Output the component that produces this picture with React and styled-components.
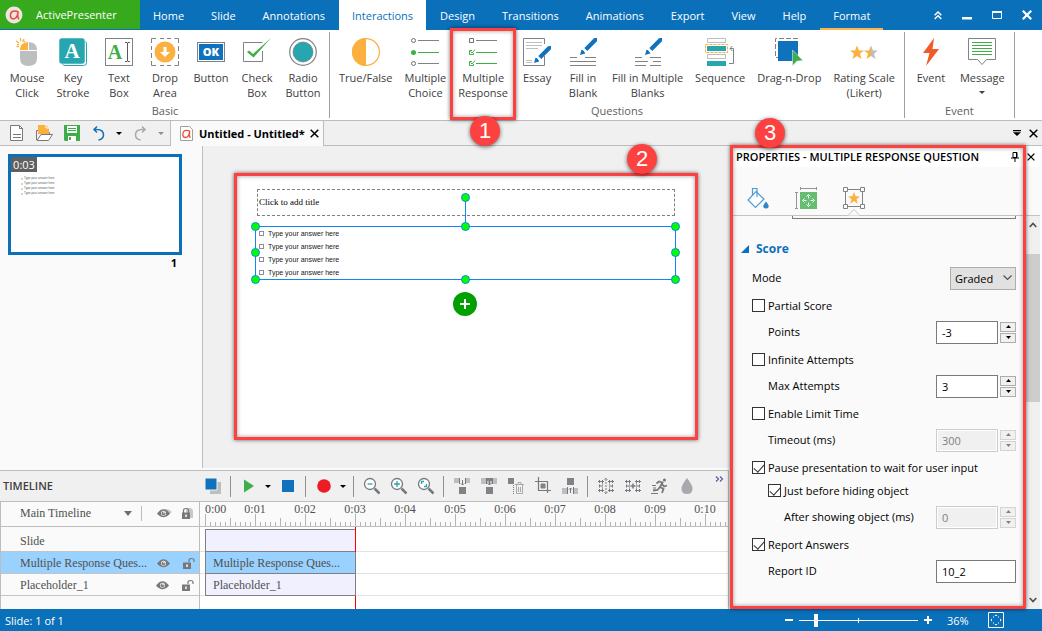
import React, { useState } from 'react';
import styled, { createGlobalStyle, css } from 'styled-components';

const ui = '"Open Sans", "Noto Sans", sans-serif';
const serif = '"Liberation Serif", serif';
const blue = '#0a70b9';
const red = '#fd4141';
const gray = '#808285';

const menuItems = [
  'Home', 'Slide', 'Annotations', 'Interactions', 'Design', 'Transitions',
  'Animations', 'Export', 'View', 'Help', 'Format',
];

const seconds = ['0:01', '0:02', '0:03', '0:04', '0:05', '0:06', '0:07', '0:08', '0:09', '0:10'];

/* ---------- ribbon icons ---------- */

const Icon = ({ w = 28, h = 28, children }) => (
  <svg width={w} height={h} viewBox={`0 0 ${w} ${h}`} fill="none" aria-hidden="true">
    {children}
  </svg>
);

const Pen = ({ x = 0, y = 0 }) => (
  <g transform={`translate(${x} ${y})`}>
    <path d="M15 2.200L5.800 11.400" stroke="#1072bd" strokeWidth="4.200" />
    <path d="M13.200 .8Q14.500-.3 17 0q.4 2.500-.8 3.900z" fill="#1072bd" />
    <path d="M0 17l1.500-5.200q2.700.3 3.700 3.700z" fill="#1072bd" />
    <path d="M2.500 11.300L6 14.800" stroke="#fff" strokeWidth=".8" />
  </g>
);

const MouseIcon = () => (
  <Icon>
    <path d="M15 4v8H7v-1q0-6 8-7z" fill="#fbb040" />
    <path d="M16 4v8h8v-1q0-6-8-7zM7 13h17v7q0 8-8.500 8T7 20z" fill="#bcbec0" />
    <path d="M7.500 0v3M3 3l3 2M11 1L9.500 4M3.500 8.500h2.500M4 7L6 6M12 3l-1 1" stroke="#fbb040" strokeWidth="1.300" />
  </Icon>
);

const KeyIcon = () => (
  <Icon>
    <rect x="3" y="3" width="24.500" height="24.500" rx="3" stroke="#27a6b0" />
    <rect width="26" height="26" rx="3" fill="#27a6b0" stroke="#fff" strokeWidth=".5" />
    <text x="13" y="20" textAnchor="middle" fontFamily="Liberation Serif" fontWeight="700" fontSize="21" fill="#fff">A</text>
  </Icon>
);

const TextIcon = () => (
  <Icon>
    <rect x=".5" y=".5" width="27" height="27" stroke={gray} />
    <text x="10" y="21" textAnchor="middle" fontFamily="Liberation Serif" fontWeight="700" fontSize="20" fill="#3fae49">A</text>
    <path d="M20 4.500h2l.5 1 .5-1h2M20 23.500h2l.5-1 .5 1h2M22.500 5v18" stroke="#58595b" />
  </Icon>
);

const DropIcon = () => (
  <Icon>
    <path d="M.5 5V.5H5M9 .5h4M16 .5h4M23.500 .5h4V5M27.500 8v5M27.500 16v5M27.500 23v4.500h-4M20 27.500h-4M13 27.500H9M5 27.500H.5V23M.5 20v-5M.5 12V8" stroke={gray} />
    <circle cx="14" cy="14" r="10.500" fill="#fbb040" />
    <path d="M12.500 9h3v5h3.500l-5 5-5-5h3.500z" fill="#fff" />
  </Icon>
);

const ButtonIcon = () => (
  <Icon>
    <rect x=".5" y="4.500" width="27" height="19" stroke={gray} />
    <rect x="2" y="6" width="24" height="16" fill="#1072bd" />
    <text x="14" y="18" textAnchor="middle" fontFamily="Open Sans" fontWeight="800" fontSize="11" fill="#fff">OK</text>
  </Icon>
);

const CheckIcon = () => (
  <Icon>
    <path d="M19.500 13v10.500H.5v-19h19" stroke={gray} />
    <path d="M4 14l2-1.500 4 3.500L28 0 10.500 19.500z" fill="#3fae49" />
  </Icon>
);

const RadioIcon = () => (
  <Icon>
    <circle cx="14" cy="14" r="13.300" stroke={gray} strokeWidth="1.200" />
    <circle cx="14" cy="14" r="10" fill="#27a6b0" stroke="#6d6e71" strokeWidth=".6" />
  </Icon>
);

const TrueFalseIcon = () => (
  <Icon>
    <circle cx="14" cy="14" r="13.400" stroke="#fbb040" strokeWidth="1.200" />
    <path d="M14 0a14 14 0 0 0 0 28z" fill="#fbb040" />
  </Icon>
);

const ChoiceIcon = () => (
  <Icon>
    <circle cx="2.500" cy="2.500" r="2" stroke="#6d6e71" />
    <circle cx="2.500" cy="14.500" r="2.500" fill="#3fae49" />
    <circle cx="2.500" cy="25.500" r="2" stroke="#6d6e71" />
    <path d="M7 2.500h21M7 25.500h21" stroke={gray} />
    <path d="M7 14.500h21" stroke="#3fae49" />
  </Icon>
);

const ResponseIcon = () => (
  <Icon>
    <path d="M.5 .5h4v4h-4z" stroke="#6d6e71" />
    <path d="M7 2.500h21" stroke={gray} />
    <path d="M3 12.500H.5v4h4V15M1.500 13.500l1.500 1.500 3-3.500M7 14.500h21M3 23.500H.5v4h4V26M1.500 24.500L3 26l3-3.500M7 25.500h21" stroke="#3fae49" />
  </Icon>
);

const EssayIcon = () => (
  <Icon>
    <path d="M21.500 6V.5H.5v27h21V18" stroke={gray} />
    <path d="M3 4.500h16M3 7.500h16M3 10.500h12M3 22.500h6M3 24.500h6" stroke="#bcbec0" />
    <Pen x={11} y={8} />
  </Icon>
);

const BlankIcon = () => (
  <Icon>
    <path d="M1 19.500h7M16 19.500h11M1 23.500h26M1 27.500h26" stroke={gray} />
    <Pen x={11} />
  </Icon>
);

const BlanksIcon = () => (
  <Icon>
    <path d="M1 19.500h7M16 19.500h11M1 23.500h13M19 23.500h8M1 27.500h11M16 27.500h11" stroke={gray} />
    <Pen x={11} />
  </Icon>
);

const SequenceIcon = () => (
  <Icon w={30}>
    <path d="M2.500 .5h18v4h-18zM2.500 16.500h18v4h-18z" stroke="#bcbec0" />
    <path d="M2 8h19v5H2zM2 23h19v5H2z" fill="#27a6b0" />
    <rect x=".5" y="6.500" width="22" height="8" stroke="#fbb040" strokeDasharray="3 1" />
    <path d="M24 25.500h4.500v-15H25M27.500 8L25 10.500l2.500 2.500" stroke={gray} />
  </Icon>
);

const DragIcon = () => (
  <Icon>
    <path d="M23 .5H.5v19H3" stroke={gray} strokeDasharray="5 2" />
    <path d="M3 3h20v20H3z" fill="#1072bd" />
    <path d="M17.500 12v16l4.300-4.800 6.200-.7z" fill="#3fae49" stroke="#fff" strokeWidth=".5" />
  </Icon>
);

const RatingIcon = () => (
  <Icon>
    <path d="M7 7.500l2 5h5l-4 3.200 1.500 5.300L7 18l-4.500 3L4 15.700 0 12.500h5z" fill="#fbb040" />
    <path d="M21 7.500l2 5h5l-4 3.200 1.500 5.300L21 18z" fill="#bcbec0" />
    <path d="M21 7.500l-2 5h-5l4 3.200-1.500 5.300L21 18z" fill="#fbb040" />
  </Icon>
);

const EventIcon = () => (
  <Icon>
    <path d="M17 0L6 15h6.500L9 28 22 11h-6.500z" fill="#f15a29" />
  </Icon>
);

const MessageIcon = () => (
  <Icon>
    <path d="M.5 .5h27v21h-9L14 26.500 9.500 21.500h-9z" stroke={gray} />
    <path d="M4 4.500h20M4 7.500h20M4 10.500h20M4 13.500h20M4 16.500h20" stroke="#3fae49" />
  </Icon>
);

const Caret = ({ color = '#000' }) => (
  <svg width="6" height="3" viewBox="0 0 6 3" aria-hidden="true">
    <path d="M0 0h6L3 3z" fill={color} />
  </svg>
);

const Cross = ({ color = '#000', size = 9, weight = 1.5 }) => (
  <svg width={size} height={size} viewBox="0 0 9 9" aria-hidden="true">
    <path d="M.7 .7l7.600 7.600M8.300 .7L.7 8.300" stroke={color} strokeWidth={weight} />
  </svg>
);

const Eye = ({ shadow }) => (
  <svg width="15" height="10" viewBox="0 0 15 10" aria-hidden="true">
    {shadow && <path d="M4 4Q9-2 15 4 9 10 4 4z" fill="#c8c8c8" />}
    <path d="M0 5.500Q6.500-3 13 5.500 6.500 13 0 5.500z" fill="#77787b" />
    <circle cx="6.500" cy="5.300" r="2.500" fill="#fff" />
    <circle cx="6.500" cy="5.300" r="1.900" fill="#77787b" />
    <circle cx="7" cy="4.800" r=".8" fill="#fff" />
  </svg>
);

const Lock = ({ open }) => (
  <svg width="13" height="13" viewBox="0 0 13 13" fill="none" aria-hidden="true">
    {open ? (
      <path d="M7 5V3.500q0-2 2.500-2T12 3.500V5" stroke="#77787b" strokeWidth="1.200" />
    ) : (
      <>
        <path d="M5 5V1h5l2 2v8H9" fill="#c8c8c8" />
        <path d="M2.500 6V3.500q0-2 2.500-2t2.500 2V6" stroke="#77787b" strokeWidth="1.200" />
      </>
    )}
    <path d="M1 5.500h8V12H1z" fill="#77787b" />
    <path d="M5 7.500V10" stroke="#fff" strokeWidth="1.500" />
  </svg>
);

const LogoGlyph = ({ color = '#f0492f' }) => (
  <path d="M11.200 4.300q-1-.9-3-.9-3.900 0-3.900 4.100 0 3 2.600 3 3.300 0 4.300-6.200-.9 4.300.4 6" stroke={color} strokeWidth="1.300" strokeLinecap="round" fill="none" />
);

/* ---------- timeline toolbar icons ---------- */

const LayersIcon = () => (
  <Icon w={18} h={18}><path d="M6 5h11v12H6z" fill="#bcbec0" /><path d="M1 1h12v12H1z" fill="#1072bd" stroke="#f0f0f0" /></Icon>
);
const PlayIcon = () => <Icon w={18} h={18}><path d="M4 2.500v13L14 9z" fill="#3fae49" /></Icon>;
const StopIcon = () => <Icon w={18} h={18}><path d="M3 3h12v12H3z" fill="#1072bd" /></Icon>;
const RecordIcon = () => <Icon w={18} h={18}><circle cx="9" cy="9" r="6.800" fill="#ed1c24" /></Icon>;

const Magnifier = ({ children }) => (
  <Icon w={18} h={18}>
    <circle cx="7" cy="7" r="5.500" stroke="#77787b" strokeWidth="1.300" fill="#fff" />
    <path d="M11.500 11.500l5 5" stroke="#77787b" strokeWidth="2.500" />
    {children}
  </Icon>
);

const SplitA = () => (
  <Icon w={18} h={18}>
    <path d="M1 1h5v5H1zM13 1h4v5h-4z" fill="#bcbec0" /><path d="M6.500 1v6M12.500 1v6M9.500 3v5M8 6.500L9.500 8 11 6.500" stroke="#77787b" />
    <path d="M6 10h7v7H6z" fill="#808285" />
  </Icon>
);
const SplitB = () => (
  <Icon w={18} h={18}>
    <path d="M1 1h16v6H1z" fill="#bcbec0" /><path d="M6 1h7v3H6z" fill="#808285" /><path d="M6.500 1v6M12.500 1v6M9.500 4v4M8 6.500L9.500 8 11 6.500" stroke="#77787b" />
    <path d="M6 10h7v7H6z" fill="#808285" />
  </Icon>
);
const TrashIcon = () => (
  <Icon w={18} h={18}>
    <path d="M1 1h6v6H1z" fill="#808285" /><path d="M6.500 8v10" stroke="#77787b" strokeDasharray="1 1" />
    <path d="M8 7.500h9M11 7V5.500h3V7M9.500 8v8.500h6V8M11.500 10v5M13.500 10v5" stroke="#a7a9ac" />
  </Icon>
);
const CropIcon = () => (
  <Icon w={18} h={18}>
    <path d="M4.500 0v13.500H17M1 4.500h12.500V16" stroke="#77787b" strokeWidth="1.200" /><path d="M7 7h4v4H7z" stroke="#808285" fill="#808285" />
  </Icon>
);
const InsertIcon = () => (
  <Icon w={18} h={18}>
    <path d="M6 1h7v7H6z" fill="#808285" /><path d="M1 11h5v6H1zM13 11h4v6h-4z" fill="#bcbec0" />
    <path d="M6.500 10v7M12.500 10v7M9.500 11v5M8 12.500L9.500 11l1.500 1.500" stroke="#77787b" />
  </Icon>
);
const FilmIcon = ({ join }) => (
  <Icon w={18} h={18}>
    <path d="M1 4.500h6M1 13.500h6M11 4.500h6M11 13.500h6M2 9h3M13 9h3" stroke="#77787b" />
    <path d="M2.500 3v3M5.500 3v3M2.500 12v3M5.500 12v3M12.500 3v3M15.500 3v3M12.500 12v3M15.500 12v3M2.500 7.500v3M15.500 7.500v3" stroke="#77787b" />
    <path d="M5.500 6v6M12.500 6v6" stroke="#a7a9ac" />
    {join ? (
      <path d="M6.500 9h5M9 6.500v5" stroke="#77787b" strokeWidth="1.500" />
    ) : (
      <path d="M9 2v14M7.500 2.500L9 1l1.500 1.500M7.500 15.500L9 17l1.500-1.500" stroke="#77787b" strokeDasharray="2 1" />
    )}
  </Icon>
);
const RunnerIcon = () => (
  <Icon w={18} h={18}>
    <circle cx="13.500" cy="3" r="1.600" fill="#77787b" />
    <path d="M5.500 6.500L8 4.500l3.500 1L9 10l3.500 2-1.500 4M8.500 10.500L6.500 13 2 13.500M11 7l2 2.500 3-1" stroke="#77787b" strokeWidth="1.800" />
    <path d="M1 8.500h4M0 16.500h7M2 11h3" stroke="#77787b" />
  </Icon>
);
const BlurIcon = () => <Icon w={18} h={18}><path d="M9 1q5.500 7 5.500 10.500 0 5.500-5.500 5.500t-5.500-5.500Q3.500 8 9 1z" fill="#a7a9ac" /></Icon>;

/* ---------- ribbon data ---------- */

const basicTools = [
  { label: ['Mouse', 'Click'], icon: <MouseIcon /> },
  { label: ['Key', 'Stroke'], icon: <KeyIcon /> },
  { label: ['Text', 'Box'], icon: <TextIcon /> },
  { label: ['Drop', 'Area'], icon: <DropIcon /> },
  { label: ['Button'], icon: <ButtonIcon /> },
  { label: ['Check', 'Box'], icon: <CheckIcon /> },
  { label: ['Radio', 'Button'], icon: <RadioIcon /> },
];

const questionTools = [
  { label: ['True/False'], icon: <TrueFalseIcon /> },
  { label: ['Multiple', 'Choice'], icon: <ChoiceIcon /> },
  { label: ['Multiple', 'Response'], icon: <ResponseIcon />, step: 1 },
  { label: ['Essay'], icon: <EssayIcon /> },
  { label: ['Fill in', 'Blank'], icon: <BlankIcon /> },
  { label: ['Fill in Multiple', 'Blanks'], icon: <BlanksIcon /> },
  { label: ['Sequence'], icon: <SequenceIcon /> },
  { label: ['Drag-n-Drop'], icon: <DragIcon /> },
  { label: ['Rating Scale', '(Likert)'], icon: <RatingIcon /> },
];

const eventTools = [
  { label: ['Event'], icon: <EventIcon /> },
  { label: ['Message'], icon: <MessageIcon />, menu: true },
];

const answers = [1, 2, 3, 4];

const Group = ({ title, tools, even }) => (
  <RibbonGroup>
    <ToolRow>
      {tools.map((tool) => (
        <Tool key={tool.label.join(' ')} type="button" $even={even}>
          {tool.icon}
          <ToolLabel>
            {tool.label.map((line) => <span key={line}>{line}</span>)}
            {tool.menu && <MenuArrow><Caret color="#404040" /></MenuArrow>}
          </ToolLabel>
          {tool.step && (
            <ToolCallout><StepBadge $place="tool">{tool.step}</StepBadge></ToolCallout>
          )}
        </Tool>
      ))}
    </ToolRow>
    <GroupTitle>{title}</GroupTitle>
  </RibbonGroup>
);

const Check = ({ id, label, checked, level = 0 }) => {
  const [on, setOn] = useState(!!checked);
  return (
    <CheckRow $level={level}>
      <CheckBox id={id} type="checkbox" checked={on} onChange={() => setOn(!on)} />
      <label htmlFor={id}>{label}</label>
    </CheckRow>
  );
};

const Spin = ({ id, label, value, disabled, level = 1 }) => (
  <FieldRow $level={level}>
    <label htmlFor={id}>{label}</label>
    <SpinBox>
      <Input id={id} type="text" defaultValue={value} disabled={disabled} />
      <Steppers>
        <StepButton type="button" aria-label={`Increase ${label}`} disabled={disabled}>
          <svg width="5" height="3" viewBox="0 0 5 3"><path d="M2.500 0L5 3H0z" fill="currentColor" /></svg>
        </StepButton>
        <StepButton type="button" aria-label={`Decrease ${label}`} disabled={disabled}>
          <svg width="5" height="3" viewBox="0 0 5 3"><path d="M0 0h5L2.500 3z" fill="currentColor" /></svg>
        </StepButton>
      </Steppers>
    </SpinBox>
  </FieldRow>
);

const App = () => {
  const [zoom, setZoom] = useState(13);

  return (
    <Window>
      <GlobalStyle />

      <TitleBar>
        <Brand>
          <svg width="18" height="18" viewBox="0 0 16 16" aria-hidden="true">
            <circle cx="8" cy="8" r="7.500" fill="#e9e6e4" />
            <g transform="translate(.5 1)"><LogoGlyph /></g>
          </svg>
          ActivePresenter
        </Brand>
        <Menu>
          {menuItems.map((item) => (
            <MenuLink key={item} href="#" $active={item === 'Interactions'} $marked={item === 'Format'}>
              {item}
            </MenuLink>
          ))}
        </Menu>
        <WindowButtons>
          <PlainButton type="button" aria-label="Collapse ribbon">
            <svg width="8" height="9" viewBox="0 0 8 9" fill="none"><path d="M.7 4.300L4 1l3.300 3.300M.7 8L4 4.700 7.300 8" stroke="#fff" strokeWidth="1.500" /></svg>
          </PlainButton>
          <PlainButton type="button" aria-label="Minimize">
            <svg width="10" height="10" viewBox="0 0 10 10"><path d="M0 7h10v2.500H0z" fill="#fff" /></svg>
          </PlainButton>
          <PlainButton type="button" aria-label="Maximize">
            <svg width="10" height="8" viewBox="0 0 10 8" fill="none"><path d="M.5 1h9v6.500h-9z" stroke="#fff" /><path d="M0 1h10" stroke="#fff" strokeWidth="2" /></svg>
          </PlainButton>
          <PlainButton type="button" aria-label="Close"><Cross color="#fff" size={10} weight={2} /></PlainButton>
        </WindowButtons>
      </TitleBar>

      <Ribbon>
        <Group title="Basic" tools={basicTools} even />
        <Group title="Questions" tools={questionTools} />
        <Group title="Event" tools={eventTools} />
      </Ribbon>

      <DocumentBar>
        <QuickAccess>
          <PlainButton type="button" aria-label="New">
            <svg width="16" height="18" viewBox="0 0 16 18" fill="none"><path d="M10.500 1.500h-9v15h12v-12zv3h3" fill="#fff" stroke="#77787b" /><path d="M4 10.500h8M4 13.500h8" stroke="#77787b" /></svg>
          </PlainButton>
          <PlainButton type="button" aria-label="Open">
            <svg width="17" height="18" viewBox="0 0 17 18" fill="none"><path d="M.5 16V6.500h4l1 2h8V10" stroke="#77787b" /><path d="M2 1h8l3 3v6H2z" fill="#fbb040" /><path d="M10 1v3h3" stroke="#fff" /><path d="M1 16.500l4-6h11.500l-4 6z" fill="#fff" stroke="#77787b" /></svg>
          </PlainButton>
          <PlainButton type="button" aria-label="Save">
            <svg width="16" height="16" viewBox="0 0 16 16"><path d="M0 0h16v16H1l-1-1z" fill="#3fae49" /><path d="M3 1h10v7H3zM4 11h8v5H4z" fill="#fff" /><path d="M4 3h8v1H4zM4 5h8v1H4zM5 12h2v3H5z" fill="#3fae49" /></svg>
          </PlainButton>
          <PlainButton type="button" aria-label="Undo">
            <svg width="14" height="16" viewBox="0 0 14 16" fill="none"><path d="M3 4.500h3q6.500 0 6.500 5.500 0 4-5 5M6 1.500L3 4.500 6 7.500" stroke="#1072bd" strokeWidth="1.500" /></svg>
          </PlainButton>
          <PlainButton type="button" aria-label="Undo history"><Caret /></PlainButton>
          <PlainButton type="button" aria-label="Redo">
            <svg width="14" height="16" viewBox="0 0 14 16" fill="none"><path d="M12 4.500H9q-6.500 0-6.500 5.500 0 4 5 5M9 1.500l3 3-3 3" stroke="#a7a9ac" strokeWidth="1.500" /></svg>
          </PlainButton>
          <PlainButton type="button" aria-label="Redo history"><Caret color="#909090" /></PlainButton>
        </QuickAccess>
        <DocumentTab>
          <svg width="15" height="17" viewBox="0 0 15 17" aria-hidden="true">
            <path d="M10.500 1.500h-9v14h12v-11z" fill="#fff" stroke="#a0a0a0" />
            <g transform="translate(-.5 2)"><LogoGlyph color="#e8503c" /></g>
          </svg>
          Untitled - Untitled*
          <PlainButton type="button" aria-label="Close tab"><Cross /></PlainButton>
        </DocumentTab>
        <DocumentActions>
          <PlainButton type="button" aria-label="Tab list">
            <svg width="8" height="6" viewBox="0 0 8 6"><path d="M0 0h8v1.200H0zM0 2.300h8L4 6z" /></svg>
          </PlainButton>
          <PlainButton type="button" aria-label="Close document"><Cross /></PlainButton>
        </DocumentActions>
      </DocumentBar>

      <Workspace>
        <Editor>
          <EditorTop>
            <SlideList>
              <Thumbnail>
                <Duration>0:03</Duration>
                <ThumbLines>
                  {answers.map((n) => <li key={n}>Type your answer here</li>)}
                </ThumbLines>
              </Thumbnail>
              <SlideNumber>1</SlideNumber>
            </SlideList>
            <Canvas>
              <Slide>
                <TitlePlaceholder>Click to add title</TitlePlaceholder>
                <QuestionBox>
                  {answers.map((n) => (
                    <Answer key={n}><AnswerBox />Type your answer here</Answer>
                  ))}
                  <RotateLine />
                  <Handle $x="50%" $y="-29px" />
                  {['0%', '50%', '100%'].map((y) => ['0%', '50%', '100%'].map((x) => (
                    (x !== '50%' || y !== '50%') && <Handle key={x + y} $x={x} $y={y} />
                  )))}
                  <AddButton type="button" aria-label="Add answer">
                    <svg width="12" height="12" viewBox="0 0 12 12"><path d="M6 1v10M1 6h10" stroke="#fff" strokeWidth="2" /></svg>
                  </AddButton>
                </QuestionBox>
                <SlideCallout><StepBadge $place="slide">2</StepBadge></SlideCallout>
              </Slide>
            </Canvas>
          </EditorTop>

          <Timeline>
            <TimelineBar>
              <TimelineTitle>TIMELINE</TimelineTitle>
              <BarButton type="button" aria-label="Layers"><LayersIcon /></BarButton>
              <Divider />
              <BarButton type="button" aria-label="Play"><PlayIcon /></BarButton>
              <BarButton type="button" aria-label="Play options" $narrow><Caret /></BarButton>
              <BarButton type="button" aria-label="Stop"><StopIcon /></BarButton>
              <Divider />
              <BarButton type="button" aria-label="Record"><RecordIcon /></BarButton>
              <BarButton type="button" aria-label="Record options" $narrow><Caret /></BarButton>
              <Divider />
              <BarButton type="button" aria-label="Zoom out"><Magnifier><path d="M4.500 7h5" stroke="#27a6b0" strokeWidth="1.300" /></Magnifier></BarButton>
              <BarButton type="button" aria-label="Zoom in"><Magnifier><path d="M4 7h6M7 4v6" stroke="#27a6b0" strokeWidth="1.300" /></Magnifier></BarButton>
              <BarButton type="button" aria-label="Zoom to fit"><Magnifier><path d="M4.500 7V4.500H7M7 9.500h2.500V7" stroke="#27a6b0" strokeWidth="1.300" /></Magnifier></BarButton>
              <Divider />
              <BarButton type="button" aria-label="Split"><SplitA /></BarButton>
              <BarButton type="button" aria-label="Overwrite"><SplitB /></BarButton>
              <BarButton type="button" aria-label="Delete range"><TrashIcon /></BarButton>
              <BarButton type="button" aria-label="Crop"><CropIcon /></BarButton>
              <BarButton type="button" aria-label="Insert time"><InsertIcon /></BarButton>
              <Divider />
              <BarButton type="button" aria-label="Split clip"><FilmIcon /></BarButton>
              <BarButton type="button" aria-label="Join clips"><FilmIcon join /></BarButton>
              <BarButton type="button" aria-label="Speed"><RunnerIcon /></BarButton>
              <BarButton type="button" aria-label="Blur"><BlurIcon /></BarButton>
              <MoreButton type="button" aria-label="More tools">
                <svg width="9" height="6" viewBox="0 0 9 6" fill="none"><path d="M1 .5L3.500 3 1 5.500M5 .5L7.500 3 5 5.500" stroke="#5c5ca8" strokeWidth="1.200" /></svg>
              </MoreButton>
            </TimelineBar>
            <TimelineBody>
              <ObjectList>
                <ObjectHead>
                  <ObjectName>Main Timeline</ObjectName>
                  <svg width="8" height="5" viewBox="0 0 8 5" aria-hidden="true"><path d="M0 0h8L4 5z" fill="#6d6e71" /></svg>
                  <HeadDivider />
                  <Eye shadow />
                  <Lock />
                </ObjectHead>
                <ObjectRow $tall><ObjectName>Slide</ObjectName></ObjectRow>
                <ObjectRow $selected><ObjectName>Multiple Response Ques...</ObjectName><Eye /><Lock open /></ObjectRow>
                <ObjectRow><ObjectName>Placeholder_1</ObjectName><Eye /><Lock open /></ObjectRow>
              </ObjectList>
              <Tracks>
                <Ruler>
                  <RulerLabels>
                    <FirstSecond>0:00</FirstSecond>
                    {seconds.map((s) => <Second key={s}>{s}</Second>)}
                  </RulerLabels>
                  <svg width="100%" height="12" aria-hidden="true">
                    <defs>
                      <pattern id="ticks" width="50" height="12" patternUnits="userSpaceOnUse">
                        <path d="M.5 0v12M5.500 8v4M10.500 8v4M15.500 8v4M20.500 8v4M25.500 4v8M30.500 8v4M35.500 8v4M40.500 8v4M45.500 8v4" stroke="#b4b4b4" />
                      </pattern>
                    </defs>
                    <rect width="100%" height="12" fill="url(#ticks)" />
                  </svg>
                </Ruler>
                <Playhead />
                <Track $tall><Clip $open /></Track>
                <Track><Clip $selected>Multiple Response Ques...</Clip></Track>
                <Track><Clip>Placeholder_1</Clip></Track>
              </Tracks>
            </TimelineBody>
          </Timeline>
        </Editor>

        <Properties>
          <PanelTitle>
            <h2>PROPERTIES - MULTIPLE RESPONSE QUESTION</h2>
            <PlainButton type="button" aria-label="Pin panel">
              <svg width="8" height="10" viewBox="0 0 8 10" fill="none"><path d="M2 .5h4v5H2zM5.500 .5v5M0 6h8M4 6v4" stroke="#000" /></svg>
            </PlainButton>
            <PlainButton type="button" aria-label="Close panel"><Cross size={8} /></PlainButton>
          </PanelTitle>
          <PanelTabs>
            <PanelTab type="button" aria-label="Style">
              <svg width="22" height="22" viewBox="0 0 22 22" fill="none">
                <path d="M9 4.500L17 12l-8.500 8.500L1 13z" fill="#fff" stroke="#4f9bd5" strokeWidth="1.200" />
                <path d="M5.500 8V1.500h4.500V10" stroke="#4f9bd5" strokeWidth="1.200" />
                <path d="M19 14.500q2.700 3.500 2.700 4.500 0 2.500-2.700 2.500T16.300 19q0-1 2.700-4.500z" fill="#2f86c9" />
              </svg>
            </PanelTab>
            <PanelTab type="button" aria-label="Size and position">
              <svg width="22" height="22" viewBox="0 0 22 22" fill="none">
                <path d="M5 5h17v17H5z" fill="#65be6f" />
                <path d="M13.500 8.500v3M13.500 15.500v3M8.500 13.500h3M15.500 13.500h3M11.500 9.500l2-2 2 2M11.500 17.500l2 2 2-2M9.500 11.500l-2 2 2 2M17.500 11.500l2 2-2 2" stroke="#fff" />
                <path d="M5.500 0v3M21.500 0v3M5 1.500h17M0 5.500h3M0 21.500h3M1.500 5v17" stroke="#939598" />
              </svg>
            </PanelTab>
            <PanelTab type="button" aria-label="Interactivity">
              <svg width="22" height="22" viewBox="0 0 22 22" fill="none">
                <path d="M2.500 5v12M19.500 5v12M5 2.500h12M5 19.500h12" stroke={gray} />
                <path d="M.5 .5h4v4h-4zM17.500 .5h4v4h-4zM.5 17.500h4v4h-4zM17.500 17.500h4v4h-4z" fill="#fff" stroke={gray} />
                <path d="M11 5l1.700 4.300 4.300.2-3.500 2.700 1.300 4.500L11 14l-3.800 2.700 1.300-4.500L5 9.500l4.300-.2z" fill="#fbb040" />
              </svg>
              <svg width="14" height="7" viewBox="0 0 14 7" fill="#fafafa"><path d="M0 6.500h1l6-6 6 6h1" stroke="#c3c3c3" /></svg>
            </PanelTab>
          </PanelTabs>
          <PanelBody>
            <Form>
              <ClippedBox />
              <SectionTitle>
                <svg width="8" height="8" viewBox="0 0 8 8" aria-hidden="true"><path d="M8 0v8H0z" fill={blue} /></svg>
                Score
              </SectionTitle>
              <FieldRow>
                <label htmlFor="mode">Mode</label>
                <SelectWrap>
                  <Select id="mode" defaultValue="Graded">
                    <option>Graded</option>
                    <option>Survey</option>
                  </Select>
                  <svg width="9" height="6" viewBox="0 0 9 6" fill="none" aria-hidden="true"><path d="M.5 .5l4 4 4-4" stroke="#505050" strokeWidth="1.200" /></svg>
                </SelectWrap>
              </FieldRow>
              <Check id="partial" label="Partial Score" />
              <Spin id="points" label="Points" value="-3" />
              <Check id="infinite" label="Infinite Attempts" />
              <Spin id="attempts" label="Max Attempts" value="3" />
              <Check id="limit" label="Enable Limit Time" />
              <Spin id="timeout" label="Timeout (ms)" value="300" disabled />
              <Check id="pause" label="Pause presentation to wait for user input" checked />
              <Check id="before" label="Just before hiding object" checked level={1} />
              <Spin id="after" label="After showing object (ms)" value="0" disabled level={2} />
              <Check id="report" label="Report Answers" checked />
              <FieldRow $level={1}>
                <label htmlFor="reportId">Report ID</label>
                <Input id="reportId" type="text" defaultValue="10_2" $wide />
              </FieldRow>
            </Form>
            <ScrollBar>
              <svg width="8" height="6" viewBox="0 0 8 6" fill="none"><path d="M.7 5L4 1.500 7.300 5" stroke="#505050" strokeWidth="1.700" /></svg>
              <ScrollThumb />
              <svg width="8" height="6" viewBox="0 0 8 6" fill="none"><path d="M.7 1L4 4.500 7.300 1" stroke="#505050" strokeWidth="1.700" /></svg>
            </ScrollBar>
          </PanelBody>
          <PanelCallout><StepBadge $place="panel">3</StepBadge></PanelCallout>
        </Properties>
      </Workspace>

      <StatusBar>
        <span>Slide: 1 of 1</span>
        <ZoomTools>
          <PlainButton type="button" aria-label="Zoom out">
            <svg width="8" height="8" viewBox="0 0 8 8"><path d="M0 4h8" stroke="#fff" strokeWidth="2" /></svg>
          </PlainButton>
          <ZoomSlider type="range" aria-label="Zoom" min="0" max="100" value={zoom} onChange={(e) => setZoom(e.target.value)} />
          <PlainButton type="button" aria-label="Zoom in">
            <svg width="8" height="8" viewBox="0 0 8 8"><path d="M0 4h8M4 0v8" stroke="#fff" strokeWidth="2" /></svg>
          </PlainButton>
          <ZoomValue>36%</ZoomValue>
          <PlainButton type="button" aria-label="Fit to window">
            <svg width="16" height="16" viewBox="0 0 16 16" fill="none">
              <path d="M.5 .5h15v15H.5z" stroke="#fff" />
              <path d="M8 2.500L9.500 4h-3zM8 13.500L9.500 12h-3zM2.500 8L4 6.500v3zM13.500 8L12 6.500v3z" fill="#fff" />
              <path d="M5 5h1M10 5h1M5 11h1M10 11h1" stroke="#fff" />
            </svg>
          </PlainButton>
        </ZoomTools>
      </StatusBar>
    </Window>
  );
};

const GlobalStyle = createGlobalStyle`
  * {
    box-sizing: border-box;
  }

  body {
    margin: 0;
    font-family: ${ui};
    font-size: 11px;
    line-height: 15px;
    color: #1a1a1a;
  }

  button, input, select {
    font: inherit;
    color: inherit;
  }

  svg {
    display: block;
    flex: none;
  }
`;

const Window = styled.div`
  display: flex;
  flex-direction: column;
  min-height: 100vh;
  background: #fafafa;
  overflow: hidden;
`;

const PlainButton = styled.button`
  display: flex;
  align-items: center;
  justify-content: center;
  padding: 0;
  border: 0;
  background: none;
`;

const TitleBar = styled.header`
  display: flex;
  height: 30px;
  background: ${blue};
  color: #fff;
`;

const Brand = styled.div`
  display: flex;
  align-items: center;
  gap: 13px;
  width: 140px;
  height: 29px;
  padding-left: 5px;
  background: #36aa1c;
`;

const Menu = styled.nav`
  display: flex;
  flex: 1;
  gap: 1px;
`;

const MenuLink = styled.a`
  display: flex;
  align-items: center;
  padding: 0 13px;
  color: #fff;
  text-decoration: none;

  ${({ $active }) => $active && css`
    background: #fff;
    color: ${blue};
  `}

  ${({ $marked }) => $marked && css`
    box-shadow: inset 0 -2px #fdb64e;
  `}
`;

const WindowButtons = styled.div`
  display: flex;
  align-items: center;
  gap: 20px;
  padding-right: 10px;
`;

const Ribbon = styled.section`
  display: flex;
  height: 91px;
  padding: 2px 0 2px 1px;
  background: #fff;
  border-bottom: 1px solid #bdbdbd;
`;

const RibbonGroup = styled.div`
  display: flex;
  flex-direction: column;
  justify-content: space-between;
  padding: 0 3px;
  border-right: 1px solid #a0a0a0;
`;

const ToolRow = styled.div`
  display: flex;
`;

const Tool = styled.button`
  position: relative;
  display: flex;
  flex-direction: column;
  align-items: center;
  gap: 4px;
  min-width: 46px;
  padding: 6px 6px 0;
  border: 0;
  background: none;
  color: #404040;

  ${({ $even }) => $even && css`
    width: 46px;
    padding: 6px 0 0;
  `}
`;

const ToolLabel = styled.span`
  display: flex;
  flex-direction: column;
  align-items: center;
  white-space: nowrap;
`;

const MenuArrow = styled.span`
  padding-top: 6px;
`;

const GroupTitle = styled.div`
  text-align: center;
  color: #606060;
`;

const callout = css`
  position: absolute;
  border: 3px solid ${red};
  box-shadow: 0 0 4px rgba(0, 0, 0, 0.6), inset 0 0 4px rgba(0, 0, 0, 0.4);
  pointer-events: none;
  z-index: 2;
`;

const ToolCallout = styled.span`
  ${callout}
  top: -4px;
  left: -2px;
  right: -2px;
  height: 92px;
`;

const badgePlaces = {
  tool: 'left: 50%; margin-left: -13px; top: 85px;',
  slide: 'right: 38px; top: -32px;',
  panel: 'left: 22px; top: -30px;',
};

const StepBadge = styled.span`
  position: absolute;
  ${({ $place }) => badgePlaces[$place]}
  display: flex;
  align-items: center;
  justify-content: center;
  width: 30px;
  height: 30px;
  border-radius: 50%;
  background: ${red};
  box-shadow: 0 1px 4px rgba(0, 0, 0, 0.6);
  color: #fff;
  font-family: "Liberation Sans", sans-serif;
  font-size: 22px;
  line-height: 30px;
`;

const DocumentBar = styled.div`
  display: flex;
  height: 25px;
  background: #f0f0f0;
`;

const QuickAccess = styled.div`
  display: flex;
  align-items: center;
  gap: 11px;
  width: 170px;
  padding: 0 0 0 9px;
  border-bottom: 1px solid #bdbdbd;
`;

const DocumentTab = styled.div`
  display: flex;
  align-items: center;
  gap: 5px;
  padding: 0 4px 0 8px;
  border: solid #bdbdbd;
  border-width: 0 1px;
  background: #fafafa;
  color: #000;
  font-weight: 700;
`;

const DocumentActions = styled.div`
  display: flex;
  flex: 1;
  align-items: center;
  justify-content: flex-end;
  gap: 8px;
  padding-right: 4px;
  border-bottom: 1px solid #bdbdbd;
`;

const Workspace = styled.main`
  display: flex;
  flex: 1;
`;

const Editor = styled.div`
  display: flex;
  flex: 1;
  flex-direction: column;
  min-width: 0;
`;

const EditorTop = styled.div`
  display: flex;
  flex: 1;
`;

const SlideList = styled.aside`
  width: 203px;
  padding: 8px 20px 0 8px;
  border-right: 1px solid #bdbdbd;
`;

const Thumbnail = styled.div`
  height: 101px;
  border: 3px solid ${blue};
  background: #fff;
`;

const Duration = styled.span`
  display: block;
  width: 26px;
  background: #606060;
  color: #fff;
  text-align: center;
`;

const ThumbLines = styled.ul`
  margin: 4px 0 0 10px;
  padding: 0;
  list-style: none;
  color: #606060;
  font-family: "Liberation Sans", sans-serif;
  font-size: 3px;
  line-height: 5px;

  li {
    display: flex;
    align-items: center;
    gap: 1px;
  }

  li::before {
    content: '';
    width: 2px;
    height: 2px;
    background: #d4d4d4;
  }
`;

const SlideNumber = styled.div`
  padding-right: 5px;
  color: #000;
  font-weight: 700;
  text-align: right;
`;

const Canvas = styled.div`
  display: flex;
  flex: 1;
  padding: 27px 32px 28px 31px;
  background: #f0f0f0;
`;

const Slide = styled.div`
  position: relative;
  flex: 1;
  background: #fff;
`;

const SlideCallout = styled.div`
  ${callout}
  inset: 0;
`;

const TitlePlaceholder = styled.div`
  position: absolute;
  top: 16px;
  left: 23px;
  right: 23px;
  height: 27px;
  padding-left: 1px;
  border: 1px dashed #808080;
  color: #000;
  font-family: ${serif};
  font-size: 9px;
  line-height: 25px;
`;

const QuestionBox = styled.div`
  position: absolute;
  top: 53px;
  left: 21px;
  right: 22px;
  height: 54px;
  padding-left: 3px;
  border: 1px solid #1484ef;
  color: #202020;
  font-family: "Liberation Sans", sans-serif;
  font-size: 7px;
  line-height: 13px;
`;

const Answer = styled.div`
  display: flex;
  align-items: center;
  gap: 4px;
`;

const AnswerBox = styled.span`
  width: 5px;
  height: 5px;
  border: 1px solid #8a8f9a;
`;

const RotateLine = styled.span`
  position: absolute;
  top: -30px;
  left: 50%;
  height: 30px;
  margin-left: -1px;
  border-left: 1px solid #1484ef;
`;

// 9px dot centred on the 1px outline, which lies just outside 0% and 100%
const Handle = styled.span`
  position: absolute;
  top: ${({ $y }) => $y};
  left: ${({ $x }) => $x};
  width: 9px;
  height: 9px;
  margin-top: ${({ $y }) => ($y === '100%' ? -4 : -5)}px;
  margin-left: ${({ $x }) => ($x === '100%' ? -4 : -5)}px;
  border: 1px solid #1484ef;
  border-radius: 50%;
  background: #00ff00;
`;

const AddButton = styled.button`
  position: absolute;
  top: 65px;
  left: 50%;
  display: flex;
  align-items: center;
  justify-content: center;
  width: 24px;
  height: 24px;
  margin-left: -13px;
  padding: 0;
  border: 0;
  border-radius: 50%;
  background: #00a000;
`;

const Timeline = styled.section`
  margin: 2px 1px 0 0;
  border-top: 1px solid #bdbdbd;
  border-right: 1px solid #bdbdbd;
`;

const TimelineBar = styled.div`
  display: flex;
  align-items: center;
  height: 31px;
  background: #f0f0f0;
  border-bottom: 1px solid #bdbdbd;
`;

const TimelineTitle = styled.h2`
  width: 199px;
  margin: 0;
  padding: 0 0 2px 3px;
  color: #404040;
  font-size: 11px;
  font-weight: 600;
`;

const BarButton = styled(PlainButton)`
  width: ${({ $narrow }) => ($narrow ? 12 : 27)}px;
  height: 24px;
`;

const MoreButton = styled(PlainButton)`
  align-self: flex-start;
  margin: 5px 4px 0 auto;
`;

const Divider = styled.span`
  width: 1px;
  height: 21px;
  margin: 0 4px;
  background: #909090;
`;

const TimelineBody = styled.div`
  display: flex;
  height: 107px;
  color: #505050;
  font-family: ${serif};
  font-size: 12px;
`;

const ObjectList = styled.div`
  width: 200px;
  border: solid #bdbdbd;
  border-width: 0 1px;
`;

const ObjectHead = styled.div`
  display: flex;
  align-items: center;
  gap: 9px;
  height: 25px;
  padding: 0 5px 2px 19px;
  border-bottom: 1px solid #bdbdbd;
`;

const ObjectRow = styled.div`
  display: flex;
  align-items: center;
  gap: 10px;
  height: ${({ $tall }) => ($tall ? 25 : 22)}px;
  padding: ${({ $tall }) => ($tall ? 4 : 1)}px 5px 0 19px;
  border-bottom: 1px solid #c4c4c4;
  background: ${({ $selected }) => ($selected ? '#99d1ff' : 'transparent')};
`;

const ObjectName = styled.span`
  flex: 1;
  white-space: nowrap;
`;

const HeadDivider = styled.span`
  width: 1px;
  height: 15px;
  margin-right: 6px;
  background: #bdbdbd;
`;

const Tracks = styled.div`
  position: relative;
  flex: 1;
  min-width: 0;
  background: #fff;
`;

const Ruler = styled.div`
  height: 25px;
  padding-left: 5px;
  border-bottom: 1px solid #bdbdbd;
  background: #fafafa;
  overflow: hidden;
`;

const RulerLabels = styled.div`
  display: flex;
  height: 12px;
  line-height: 14px;
`;

const FirstSecond = styled.span`
  flex: none;
  width: 25px;
`;

const Second = styled.span`
  flex: none;
  width: 50px;
  text-align: center;
`;

const Playhead = styled.span`
  position: absolute;
  top: 25px;
  bottom: 0;
  left: 155px;
  width: 1px;
  background: #ff0000;
`;

const Track = styled.div`
  display: flex;
  height: ${({ $tall }) => ($tall ? 25 : 22)}px;
  padding-left: 5px;
  padding-top: ${({ $tall }) => ($tall ? 2 : 0)}px;
  border-bottom: 1px solid #e2e2e2;
`;

const Clip = styled.div`
  position: relative;
  width: 151px;
  margin-bottom: -1px;
  padding-left: 7px;
  border: solid #808080;
  border-width: ${({ $open }) => ($open ? '1px 0 1px 1px' : '0 1px 1px')};
  background: ${({ $selected }) => ($selected ? '#99d1ff' : '#f0f0ff')};
  line-height: 22px;
  white-space: nowrap;

  ${({ $open }) => $open && css`
    width: 150px;
  `}
`;

const Properties = styled.aside`
  position: relative;
  display: flex;
  flex-direction: column;
  width: 312px;
  padding-right: 2px;
  padding-left: 3px;
`;

const PanelTitle = styled.div`
  display: flex;
  align-items: center;
  gap: 8px;
  height: 21px;
  padding: 0 5px 0 3px;
  background: #fff;

  h2 {
    flex: 1;
    margin: 0;
    color: #000;
    font-size: 11px;
    font-weight: 600;
    white-space: nowrap;
  }
`;

const PanelTabs = styled.div`
  display: flex;
  gap: 26px;
  height: 49px;
  padding: 20px 14px 0;
  border-bottom: 1px solid #c3c3c3;
`;

const PanelTab = styled(PlainButton)`
  flex-direction: column;
  justify-content: flex-start;
  height: 29px;
`;

const PanelBody = styled.div`
  display: flex;
  flex: 1;
`;

const Form = styled.form`
  flex: 1;
  padding: 0 10px 16px 19px;
  color: #000;
`;

const ClippedBox = styled.div`
  height: 3px;
  margin-left: 40px;
  border: 1px solid #7a7a7a;
  border-top: 0;
`;

const SectionTitle = styled.h3`
  display: flex;
  align-items: center;
  gap: 7px;
  margin: 22px 0 10px -11px;
  color: ${blue};
  font-size: 12px;
  font-weight: 700;
`;

const indent = ({ $level = 0 }) => $level * 16;

const FieldRow = styled.div`
  display: flex;
  align-items: center;
  justify-content: space-between;
  height: 24px;
  margin-bottom: 7px;
  padding-left: ${indent}px;

  label {
    padding-bottom: 2px;
  }
`;

const CheckRow = styled.div`
  display: flex;
  align-items: center;
  gap: 3px;
  height: 18px;
  margin-bottom: 5px;
  padding: 0 0 1px ${indent}px;
  white-space: nowrap;
`;

const CheckBox = styled.input`
  appearance: none;
  position: relative;
  width: 13px;
  height: 13px;
  margin: 0;
  border: 1px solid #333;
  background: #fff;

  &:checked::after {
    content: '';
    position: absolute;
    top: 0;
    left: 3px;
    width: 5px;
    height: 9px;
    border: solid #333;
    border-width: 0 1px 1px 0;
    transform: rotate(42deg);
  }
`;

const Input = styled.input`
  width: ${({ $wide }) => ($wide ? 80 : 62)}px;
  height: 23px;
  padding: 0 5px;
  border: 1px solid #7a7a7a;
  background: #fff;
  outline: none;

  &:disabled {
    border-color: #ccc;
    background: #f0f0f0;
    box-shadow: inset 0 0 0 1px #fff;
    color: #808080;
  }
`;

const SpinBox = styled.div`
  display: flex;
  align-items: center;
  gap: 2px;
`;

const Steppers = styled.div`
  display: flex;
  flex-direction: column;
  gap: 1px;
`;

const StepButton = styled(PlainButton)`
  width: 16px;
  height: 10px;
  border: 1px solid #adadad;
  background: #f0f0f0;

  &:disabled {
    border-color: #d4d4d4;
    color: #808080;
  }
`;

const SelectWrap = styled.div`
  display: grid;
  align-items: center;

  svg {
    grid-area: 1 / 1;
    justify-self: end;
    margin-right: 4px;
    pointer-events: none;
  }
`;

const Select = styled.select`
  grid-area: 1 / 1;
  appearance: none;
  width: 66px;
  height: 23px;
  padding: 0 4px;
  border: 1px solid #adadad;
  border-radius: 0;
  background: #e1e1e1;
`;

const ScrollBar = styled.div`
  display: flex;
  flex-direction: column;
  align-items: center;
  justify-content: space-between;
  width: 14px;
  padding: 6px 0;
  background: #f0f0f0;
`;

const ScrollThumb = styled.div`
  width: 100%;
  height: 148px;
  margin: 26px 0 auto;
  background: #cdcdcd;
`;

const PanelCallout = styled.div`
  ${callout}
  top: -1px;
  left: 0;
  right: 16px;
  bottom: 0;
`;

const StatusBar = styled.footer`
  display: flex;
  align-items: center;
  justify-content: space-between;
  height: 22px;
  padding: 0 38px 0 5px;
  background: ${blue};
  color: #fff;
`;

const ZoomTools = styled.div`
  display: flex;
  align-items: center;
  gap: 6px;
`;

const ZoomSlider = styled.input`
  appearance: none;
  width: 119px;
  height: 14px;
  margin: 0;
  background:
    linear-gradient(#fff, #fff) center / 1px 5px no-repeat,
    linear-gradient(#fff, #fff) center / 100% 1px no-repeat;

  &::-webkit-slider-thumb {
    appearance: none;
    width: 4px;
    height: 13px;
    border: 0;
    border-radius: 0;
    background: #fff;
  }
`;

const ZoomValue = styled.span`
  width: 44px;
  padding-left: 9px;
`;

export default App;
